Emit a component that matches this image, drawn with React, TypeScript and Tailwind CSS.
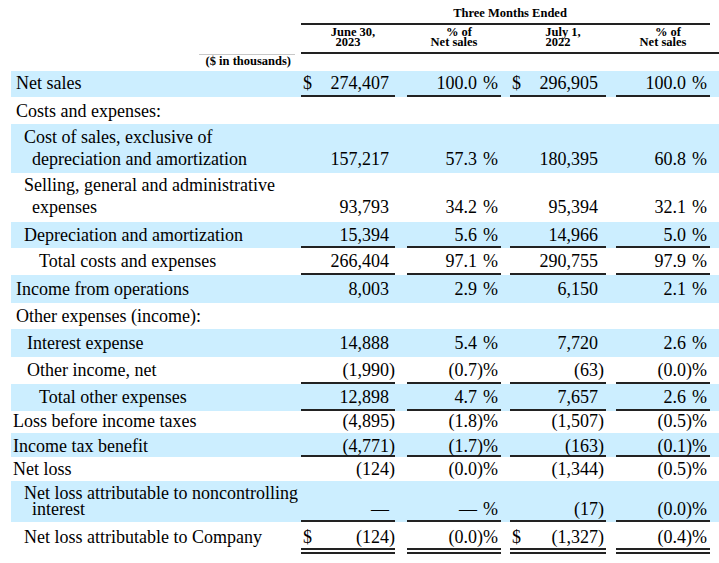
import React from "react";

type Row = {
  label: { t: string; pl: string }[];
  h: string;
  lh: string;
  pb: string;
  blue?: boolean;
  line?: "single" | "double";
  vals?: string[];
  dollar?: boolean;
};

const rows: Row[] = [
  { label: [{ t: "Net sales", pl: "pl-[5px]" }], h: "h-[26px]", lh: "leading-[22px]", pb: "pb-[1px]", blue: true, line: "single", vals: ["274,407", "100.0", "296,905", "100.0"], dollar: true },
  { label: [{ t: "Costs and expenses:", pl: "pl-[5px]" }], h: "h-[27px]", lh: "leading-[22px]", pb: "pb-0" },
  {
    label: [
      { t: "Cost of sales, exclusive of", pl: "pl-[13px]" },
      { t: "depreciation and amortization", pl: "pl-[21px]" },
    ],
    h: "h-[49px]", lh: "leading-[22px]", pb: "pb-[1px]", blue: true,
    vals: ["157,217", "57.3", "180,395", "60.8"],
  },
  {
    label: [
      { t: "Selling, general and administrative", pl: "pl-[13px]" },
      { t: "expenses", pl: "pl-[21px]" },
    ],
    h: "h-[49px]", lh: "leading-[22px]", pb: "pb-[2px]",
    vals: ["93,793", "34.2", "95,394", "32.1"],
  },
  { label: [{ t: "Depreciation and amortization", pl: "pl-[13px]" }], h: "h-[26px]", lh: "leading-[22px]", pb: "pb-0", blue: true, line: "single", vals: ["15,394", "5.6", "14,966", "5.0"] },
  { label: [{ t: "Total costs and expenses", pl: "pl-[28px]" }], h: "h-[27px]", lh: "leading-[22px]", pb: "pb-[1px]", line: "single", vals: ["266,404", "97.1", "290,755", "97.9"] },
  { label: [{ t: "Income from operations", pl: "pl-[5px]" }], h: "h-[28px]", lh: "leading-[22px]", pb: "pb-[1px]", blue: true, vals: ["8,003", "2.9", "6,150", "2.1"] },
  { label: [{ t: "Other expenses (income):", pl: "pl-[5px]" }], h: "h-[26px]", lh: "leading-[22px]", pb: "pb-0" },
  { label: [{ t: "Interest expense", pl: "pl-[16px]" }], h: "h-[28px]", lh: "leading-[22px]", pb: "pb-[1px]", blue: true, vals: ["14,888", "5.4", "7,720", "2.6"] },
  { label: [{ t: "Other income, net", pl: "pl-[16px]" }], h: "h-[27px]", lh: "leading-[22px]", pb: "pb-[1px]", line: "single", vals: ["(1,990)", "(0.7)", "(63)", "(0.0)"] },
  { label: [{ t: "Total other expenses", pl: "pl-[28px]" }], h: "h-[27px]", lh: "leading-[22px]", pb: "pb-[1px]", blue: true, line: "single", vals: ["12,898", "4.7", "7,657", "2.6"] },
  { label: [{ t: "Loss before income taxes", pl: "pl-[2px]" }], h: "h-[22px]", lh: "leading-[20px]", pb: "pb-0", vals: ["(4,895)", "(1.8)", "(1,507)", "(0.5)"] },
  { label: [{ t: "Income tax benefit", pl: "pl-[2px]" }], h: "h-[24px]", lh: "leading-[18px]", pb: "pb-0", blue: true, line: "single", vals: ["(4,771)", "(1.7)", "(163)", "(0.1)"] },
  { label: [{ t: "Net loss", pl: "pl-[2px]" }], h: "h-[24px]", lh: "leading-[20px]", pb: "pb-0", vals: ["(124)", "(0.0)", "(1,344)", "(0.5)"] },
  {
    label: [
      { t: "Net loss attributable to noncontrolling", pl: "pl-[13px]" },
      { t: "interest", pl: "pl-[21px]" },
    ],
    h: "h-[41px]", lh: "leading-[16px]", pb: "pb-[3px]", blue: true, line: "single",
    vals: ["—", "—", "(17)", "(0.0)"],
  },
  { label: [{ t: "Net loss attributable to Company", pl: "pl-[13px]" }], h: "h-[32px]", lh: "leading-[22px]", pb: "pb-0", line: "double", vals: ["(124)", "(0.0)", "(1,327)", "(0.4)"], dollar: true },
];

function split(v: string) {
  if (v.startsWith("(") && v.endsWith(")")) return { n: v.slice(0, -1), p: true };
  return { n: v, p: false };
}

function Amount({ v, dollar, w, pr, border }: { v?: string; dollar?: boolean; w: string; pr: string; border: string }) {
  const { n, p } = split(v ?? "");
  return (
    <div className={`flex items-end justify-between ${w} ${pr} ${border}`}>
      <span className="pl-[2px]">{dollar ? "$" : ""}</span>
      {v ? (
        <span className="whitespace-nowrap">
          {n}
          <span className="inline-block w-[6px]">{p ? ")" : ""}</span>
        </span>
      ) : null}
    </div>
  );
}

function Percent({ v, border }: { v?: string; border: string }) {
  const { n, p } = split(v ?? "");
  return (
    <div className={`flex w-[94px] items-end justify-end pr-[3px] ${border}`}>
      {v ? (
        <span className="whitespace-nowrap">
          {n}
          <span className="inline-block w-[6px]">{p ? ")" : ""}</span>%
        </span>
      ) : null}
    </div>
  );
}

function TableRow({ r }: { r: Row }) {
  const edge = r.line === "double" ? "border-b-[6px] border-double" : "border-b-2 border-solid";
  const shown = r.line ? "border-[#222]" : "border-transparent";
  const lineCls = `${edge} ${shown} ${r.pb}`;
  const plain = `${edge} border-transparent ${r.pb}`;
  return (
    <div className={`flex items-stretch ${r.h} ${r.lh} ${r.blue ? "bg-[#cceeff]" : ""}`}>
      <div className={`flex w-[290px] flex-col justify-end ${plain}`}>
        {r.label.map((l) => (
          <div key={l.t} className={`whitespace-nowrap ${l.pl}`}>
            {l.t}
          </div>
        ))}
      </div>
      <Amount v={r.vals?.[0]} dollar={r.dollar} w="w-[94px]" pr="pr-0" border={r.vals ? lineCls : plain} />
      <div className="w-[12px]" />
      <Percent v={r.vals?.[1]} border={r.vals ? lineCls : plain} />
      <div className="w-[9px]" />
      <Amount v={r.vals?.[2]} dollar={r.dollar} w="w-[96px]" pr="pr-[2px]" border={r.vals ? lineCls : plain} />
      <div className="w-[10px]" />
      <Percent v={r.vals?.[3]} border={r.vals ? lineCls : plain} />
      <div className="w-[9px]" />
    </div>
  );
}

function ColHead({ a, b, w }: { a: string; b: string; w: string }) {
  return (
    <div className={`flex ${w} flex-col items-center justify-end pb-[5px] leading-[9.5px]`}>
      <div className="whitespace-nowrap pl-[10px]">{a}</div>
      <div className="whitespace-nowrap">{b}</div>
    </div>
  );
}

export default function App() {
  return (
    <div className="h-[563px] w-[719px] overflow-hidden bg-white font-['Liberation_Serif','Times_New_Roman',serif] text-black">
      <div className="text-[12.5px] font-bold">
        <div className="flex h-[25px]">
          <div className="w-[301px]" />
          <div className="flex w-[409px] items-end justify-center border-b-2 border-[#222] pb-[2px] pl-[9px] leading-[15px]">
            Three Months Ended
          </div>
        </div>
        <div className="flex h-[29px]">
          <div className="w-[301px]" />
          <div className="flex w-[418px] border-b-2 border-[#222]">
            <ColHead a="June 30," b="2023" w="w-[94px]" />
            <div className="w-[12px]" />
            <ColHead a="% of" b="Net sales" w="w-[94px]" />
            <div className="w-[9px]" />
            <ColHead a="July 1," b="2022" w="w-[96px]" />
            <div className="w-[10px]" />
            <ColHead a="% of" b="Net sales" w="w-[94px]" />
          </div>
        </div>
        <div className="flex h-[17px]">
          <div className="w-[199px]" />
          <div className="w-[96px] border-t border-[#c8c8c8] pr-[4px] text-right leading-[13px]">($ in thousands)</div>
        </div>
      </div>
      <div className="pl-[11px] text-[18px]">
        {rows.map((r) => (
          <TableRow key={r.label[0].t} r={r} />
        ))}
      </div>
    </div>
  );
}
